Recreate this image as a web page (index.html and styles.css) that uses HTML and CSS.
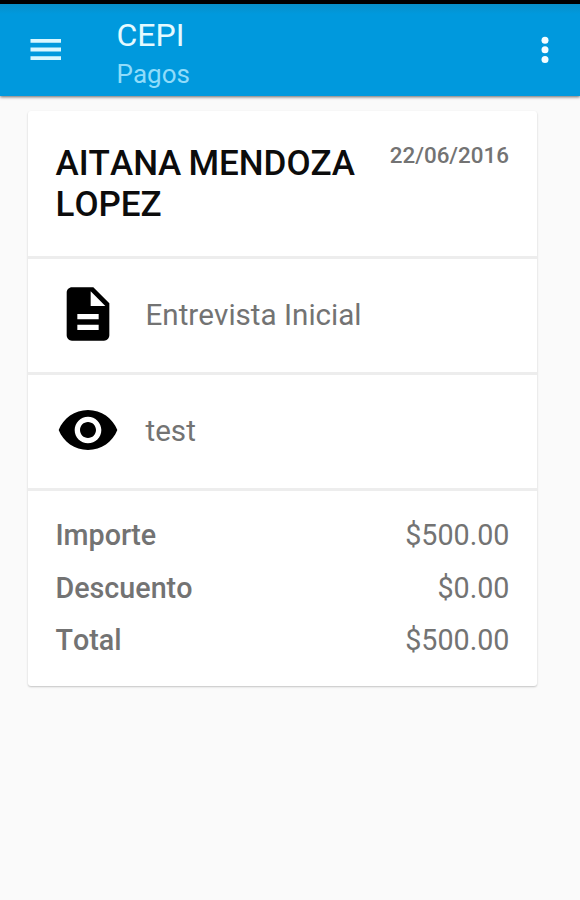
FILE: index.html
```html
<!DOCTYPE html>
<html lang="es">
<head>
    <meta charset="UTF-8">
    <meta name="viewport" content="width=device-width, initial-scale=1.0">
    <title>CEPI - Pagos</title>
    <link rel="stylesheet" href="styles.css">
</head>
<body>

<header class="toolbar">
    <svg class="menu-icon" width="32" height="24" viewBox="0 0 32 24">
        <path fill="#d9f7ff" d="M0.5 1h30.5v3.8H0.5zM0.5 9.6h30.5v3.8H0.5zM0.5 18.2h30.5v3.8H0.5z"/>
    </svg>
    <div class="toolbar-titles">
        <h1 class="toolbar-title">CEPI</h1>
        <p class="toolbar-subtitle">Pagos</p>
    </div>
    <svg class="more-icon" width="8" height="28" viewBox="0 0 8 28">
        <g fill="#f4fdff">
            <circle cx="4" cy="4.2" r="3.5"/>
            <circle cx="4" cy="13.8" r="3.5"/>
            <circle cx="4" cy="23.4" r="3.5"/>
        </g>
    </svg>
</header>

<main class="card">
    <section class="card-header">
        <h2 class="name">AITANA MENDOZA LOPEZ</h2>
        <span class="date">22/06/2016</span>
    </section>

    <section class="card-row">
        <svg class="row-icon" width="64" height="64" viewBox="0 0 24 24">
            <path d="M14 2H6c-1.1 0-1.99.9-1.99 2L4 20c0 1.1.89 2 1.99 2H18c1.1 0 2-.9 2-2V8l-6-6zm2 16H8v-2h8v2zm0-4H8v-2h8v2zm-3-5V3.5L18.5 9H13z"/>
        </svg>
        <span class="row-text">Entrevista Inicial</span>
    </section>

    <section class="card-row">
        <svg class="row-icon" width="64" height="64" viewBox="0 0 24 24">
            <path d="M12 4.5C7 4.5 2.73 7.61 1 12c1.73 4.39 6 7.5 11 7.5s9.27-3.11 11-7.5c-1.73-4.39-6-7.5-11-7.5zM12 17c-2.76 0-5-2.24-5-5s2.24-5 5-5 5 2.24 5 5-2.24 5-5 5zm0-8c-1.66 0-3 1.34-3 3s1.34 3 3 3 3-1.34 3-3-1.34-3-3-3z"/>
        </svg>
        <span class="row-text">test</span>
    </section>

    <section class="totals">
        <div class="total-line"><span class="label">Importe</span><span class="amount">$500.00</span></div>
        <div class="total-line"><span class="label">Descuento</span><span class="amount">$0.00</span></div>
        <div class="total-line"><span class="label">Total</span><span class="amount">$500.00</span></div>
    </section>
</main>

</body>
</html>
```

FILE: styles.css
```css
*{
    padding: 0;
    margin: 0;
    box-sizing: border-box;
}

body{
    font-family: Roboto, sans-serif;
    font-kerning: none;
    background-color: #fafafa;
    color: #737373;
    min-height: 900px;
}

/* toolbar, the black edge is the status bar */
.toolbar{
    height: 96px;
    border-top: 4px solid #000;
    background: linear-gradient(#078fc9, #0099dd 10px);
    box-shadow: 0 1px 3px rgba(0, 0, 0, 0.6);
    display: flex;
    align-items: center;
    padding: 0 31px 0 30px;
}

.toolbar-titles{
    flex: 1;
    margin-left: 54.5px;
    padding-top: 8px;
}

.toolbar-title{
    color: #e4faff;
    font-size: 32px;
    font-weight: 400;
    line-height: 40px;
}

.toolbar-subtitle{
    color: #90dcfa;
    font-size: 26px;
    line-height: 38px;
}

.card{
    width: 509px;
    height: 575px;
    margin: 15px 0 0 28px;
    background-color: #fff;
    border-radius: 3px;
    box-shadow: 0 1px 2px rgba(0, 0, 0, 0.22);
}

.card-header{
    height: 148px;
    padding: 32px 28px 0 27.5px;
    border-bottom: 3px solid #ededed;
    display: flex;
    justify-content: space-between;
}

.name{
    width: 315px;
    color: #0c0c0c;
    font-size: 35px;
    font-weight: 500;
    word-spacing: -1.5px;
    line-height: 41px;
}

.date{
    font-size: 22.4px;
    font-weight: 500;
    line-height: 25px;
}

.card-row{
    height: 116px;
    padding: 0 0 3px 27.5px;
    border-bottom: 3px solid #ededed;
    display: flex;
    align-items: center;
    gap: 26px;
}

.row-text{
    font-size: 29.6px;
    padding-top: 2px;
}

.totals{
    padding: 18px 27.5px 0 27.5px;
}

.total-line{
    display: flex;
    justify-content: space-between;
    font-size: 28.7px;
    line-height: 52.5px;
}

.label{
    font-weight: 500;
}
```
